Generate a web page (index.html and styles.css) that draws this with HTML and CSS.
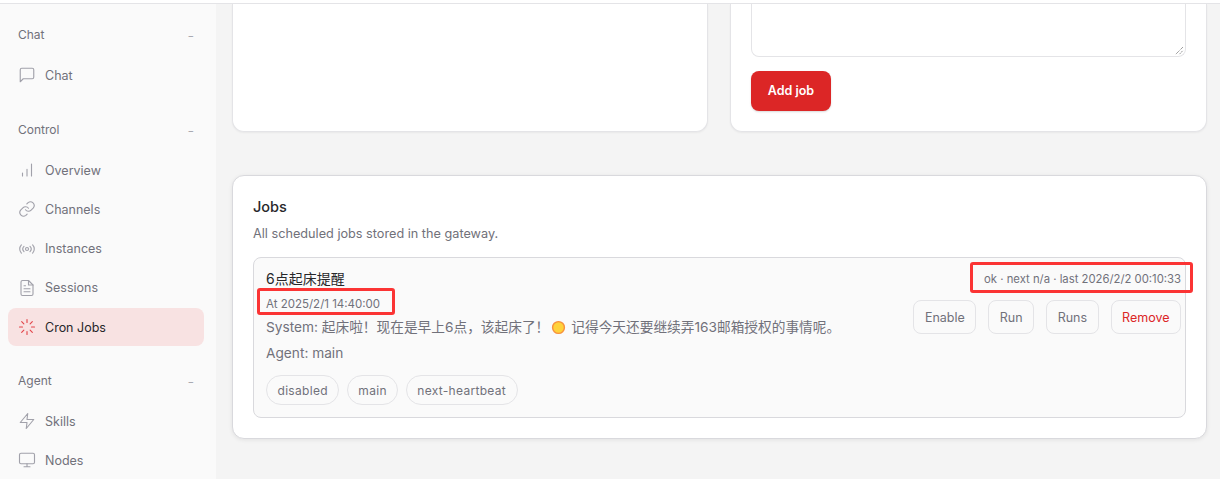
FILE: index.html
```html
<!DOCTYPE html>
<html lang="en">
<head>
<meta charset="utf-8">
<title>Cron Jobs</title>
<link rel="stylesheet" href="styles.css">
</head>
<body>
<div class="topbar"></div>
<div class="shell">
  <nav class="sidebar">
    <div class="group-label"><span>Chat</span><span class="minus">−</span></div>
    <a class="nav-item"><svg class="icon" viewBox="0 0 24 24"><path d="M21 15a2 2 0 0 1-2 2H7l-4 4V5a2 2 0 0 1 2-2h14a2 2 0 0 1 2 2z"/></svg>Chat</a>
    <div class="group-label group-gap"><span>Control</span><span class="minus">−</span></div>
    <a class="nav-item"><svg class="icon" viewBox="0 0 24 24"><path d="M18 20V4M12 20v-9M6 20v-4"/></svg>Overview</a>
    <a class="nav-item"><svg class="icon" viewBox="0 0 24 24"><path d="M10 13a5 5 0 0 0 7.5.5l3-3a5 5 0 0 0-7-7l-1.7 1.7"/><path d="M14 11a5 5 0 0 0-7.5-.5l-3 3a5 5 0 0 0 7 7l1.7-1.7"/></svg>Channels</a>
    <a class="nav-item"><svg class="icon" viewBox="0 0 24 24"><circle cx="12" cy="12" r="2"/><path d="M4.500 6.500a8 8 0 0 0 0 11M8 8.500a5 5 0 0 0 0 7M19.500 6.500a8 8 0 0 1 0 11M16 8.500a5 5 0 0 1 0 7"/></svg>Instances</a>
    <a class="nav-item"><svg class="icon" viewBox="0 0 24 24"><path d="M14 2H6a2 2 0 0 0-2 2v16a2 2 0 0 0 2 2h12a2 2 0 0 0 2-2V8z"/><path d="M14 2v6h6M16 13H8M16 17H8M10 9H8"/></svg>Sessions</a>
    <a class="nav-item active"><svg class="icon" viewBox="0 0 24 24"><path d="M12 2v4M12 18v4M4.900 4.900l2.900 2.900M16.200 16.200l2.900 2.900M2 12h4M18 12h4M4.900 19.100l2.900-2.900M16.200 7.800l2.900-2.900"/></svg>Cron Jobs</a>
    <div class="group-label group-gap-2"><span>Agent</span><span class="minus">−</span></div>
    <a class="nav-item"><svg class="icon" viewBox="0 0 24 24"><path d="M13 2 3 14h9l-1 8 10-12h-9z"/></svg>Skills</a>
    <a class="nav-item"><svg class="icon" viewBox="0 0 24 24"><rect x="2" y="3" width="20" height="14" rx="2"/><path d="M8 21h8M12 17v4"/></svg>Nodes</a>
  </nav>
  <main class="content">
    <div class="top-cards">
      <section class="card-cut"></section>
      <section class="card-cut form-end">
        <div class="textarea"><svg class="grip" viewBox="0 0 10 10"><path d="M1 9 9 1M5 9 9 5"/></svg></div>
        <button class="primary">Add job</button>
      </section>
    </div>
    <section class="card">
      <h2 class="card-title">Jobs</h2>
      <p class="card-sub">All scheduled jobs stored in the gateway.</p>
      <div class="job">
        <div class="job-main">
          <div class="job-title">6点起床提醒</div>
          <div class="job-at">At 2025/2/1 14:40:00</div>
          <div class="job-line">System: 起床啦！现在是早上6点，该起床了！<svg class="sun" viewBox="0 0 16 16"><circle cx="8" cy="8" r="6.300"/></svg>记得今天还要继续弄163邮箱授权的事情呢。</div>
          <div class="job-line agent">Agent: main</div>
          <div class="chips"><span class="chip">disabled</span><span class="chip">main</span><span class="chip">next-heartbeat</span></div>
        </div>
        <div class="job-side">
          <div class="job-status">ok · next n/a · last 2026/2/2 00:10:33</div>
          <div class="actions">
            <button class="btn">Enable</button>
            <button class="btn">Run</button>
            <button class="btn">Runs</button>
            <button class="btn danger">Remove</button>
          </div>
        </div>
        <div class="mark mark-at"></div>
        <div class="mark mark-status"></div>
      </div>
    </section>
  </main>
</div>
</body>
</html>
```
FILE: styles.css
```css
* { box-sizing: border-box; }
html, body { margin: 0; height: 479px; overflow: hidden; }
body {
  font-family: Inter, "Noto Sans CJK SC", sans-serif;
  background: #f4f4f4;
  color: #71717a;
}
.topbar { height: 4px; background: #fff; border-bottom: 1px solid #e4e4e7; }
.shell { display: flex; height: 475px; }

.sidebar {
  width: 216px;
  flex: none;
  background: #fafafa;
  padding: 22px 12px 0 8px;
  font-size: 12.5px;
}
.group-label {
  display: flex;
  justify-content: space-between;
  align-items: center;
  height: 17px;
  padding: 0 10px;
  font-size: 12px;
  color: #71717a;
  margin-bottom: 13px;
}
.group-gap { margin-top: 27px; margin-bottom: 13px; }
.group-gap-2 { margin-top: 26px; margin-bottom: 13px; }
.minus { color: #a1a1aa; font-size: 10px; }
.nav-item {
  display: flex;
  align-items: center;
  gap: 9px;
  height: 38px;
  margin-bottom: 1.250px;
  padding: 0 10px;
  border-radius: 8px;
  color: #71717a;
}
.nav-item.active { background: #f8e2e2; color: #27272a; }
.icon {
  width: 18px;
  height: 18px;
  flex: none;
  fill: none;
  stroke: #a1a1aa;
  stroke-width: 1.500;
  stroke-linecap: round;
  stroke-linejoin: round;
}
.active .icon { stroke: #e2454a; }

.content { flex: 1; padding: 0 13px 0 16px; min-width: 0; }
.top-cards { display: grid; grid-template-columns: 476px 1fr; gap: 22px; height: 128px; }
.card-cut {
  background: #fff;
  border: 1px solid #e4e4e7;
  border-top: 0;
  border-radius: 0 0 12px 12px;
  box-shadow: 0 1px 2px rgba(0,0,0,.05);
}
.form-end { padding: 0 20px; }
.textarea {
  position: relative;
  height: 53px;
  background: #fff;
  border: 1px solid #e4e4e7;
  border-top: 0;
  border-radius: 0 0 8px 8px;
}
.grip { position: absolute; right: 1px; bottom: 1px; width: 9px; height: 9px; fill: none; stroke: #555; stroke-width: 1; stroke-dasharray: 1 1; }
.primary {
  display: block;
  margin-top: 14px;
  width: 80px;
  height: 40px;
  padding: 0 0 2px;
  border: 0;
  border-radius: 8px;
  background: #dc2626;
  color: #fff;
  font: 600 12.5px Inter, sans-serif;
  box-shadow: 0 1px 2px rgba(0,0,0,.15);
}

.card {
  margin-top: 43px;
  height: 264px;
  padding: 21px 20px 0;
  background: #fff;
  border: 1px solid #d9d9dd;
  border-radius: 12px;
  box-shadow: 0 1px 4px rgba(0,0,0,.08);
}
.card-title { margin: 0; font-size: 14.500px; line-height: 19px; font-weight: 500; color: #27272a; }
.card-sub { margin: 9px 0 0; font-size: 12.700px; line-height: 17px; color: #71717a; }
.job {
  position: relative;
  display: flex;
  justify-content: space-between;
  margin-top: 15px;
  height: 161px;
  padding: 11px 4px 0 12px;
  background: #fafafa;
  border: 1px solid #d9d9dd;
  border-radius: 8px;
}
.job-title { font-size: 14px; line-height: 19px; color: #27272a; }
.job-at { margin-top: 9px; font-size: 11.500px; line-height: 15px; color: #71717a; }
.job-line { display: flex; align-items: center; margin-top: 6px; font-size: 13.700px; line-height: 18px; color: #71717a; }
.agent { margin-top: 8px; }
.sun { width: 15px; height: 15px; margin: 0 5.500px 0 1.500px; fill: #ffd23a; stroke: #f7913d; stroke-width: 1.500; }
.chips { display: flex; gap: 7.500px; margin-top: 13px; }
.chip {
  height: 30px;
  padding: 0 10.500px;
  display: flex;
  align-items: center;
  border: 1px solid #e4e4e7;
  border-radius: 15px;
  font-size: 12px;
  letter-spacing: .3px;
  color: #71717a;
}
.job-side { display: flex; flex-direction: column; align-items: flex-end; padding-top: 1px; }
.job-status { margin: 1px 0 0; font-size: 11.300px; line-height: 16px; color: #71717a; }
.actions { display: flex; gap: 12px; margin-top: 13px; }
.btn {
  height: 34px;
  padding: 0 10.500px;
  border: 1px solid #e4e4e7;
  border-radius: 8px;
  background: #fafafa;
  color: #71717a;
  font: 12.500px Inter, sans-serif;
}
.danger { color: #dc2626; }
.mark { position: absolute; border: 3px solid #fb3434; border-radius: 3px; }
.mark-at { left: 3px; top: 30px; width: 138px; height: 27px; }
.mark-status { right: -8px; top: 4px; width: 223px; height: 31px; }
```
